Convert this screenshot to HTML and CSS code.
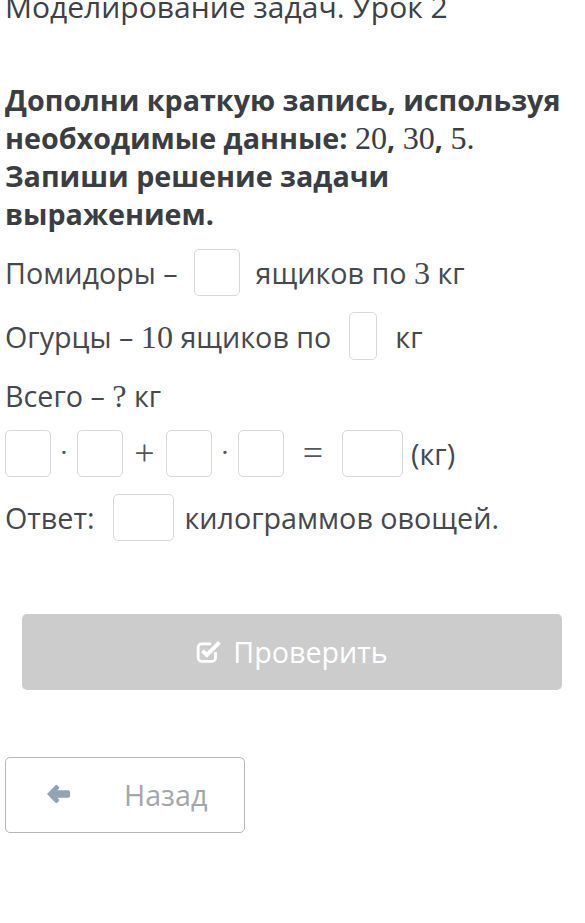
FILE: index.html
```html
<!DOCTYPE html>
<html lang="ru">
<head>
<meta charset="utf-8">
<link rel="stylesheet" href="styles.css">
</head>
<body>
<div class="page">
  <h1 class="title">Моделирование задач. Урок 2</h1>
  <p class="task">Дополни краткую запись, используя необходимые данные: <span class="num">20</span>, <span class="num">30</span>, <span class="num">5.</span> Запиши решение задачи выражением.</p>

  <div class="row r1">
    <span>Помидоры –</span>
    <span class="box"></span>
    <span>ящиков по <span class="num">3</span> кг</span>
  </div>
  <div class="row r2">
    <span>Огурцы – <span class="num">10</span> ящиков по</span>
    <span class="box narrow"></span>
    <span>кг</span>
  </div>
  <div class="row r3">
    <span>Всего – <span class="num">?</span> кг</span>
  </div>
  <div class="row r4">
    <span class="box"></span>
    <span class="op dot">·</span>
    <span class="box"></span>
    <span class="op plus">+</span>
    <span class="box"></span>
    <span class="op dot">·</span>
    <span class="box"></span>
    <span class="op eq">=</span>
    <span class="box wide"></span>
    <span class="unit">(кг)</span>
  </div>
  <div class="row r5">
    <span>Ответ:</span>
    <span class="box wide"></span>
    <span>килограммов овощей.</span>
  </div>

  <div class="check-wrap">
    <button class="check">
      <svg class="check-icon" viewBox="0 0 24 24" width="26" height="26">
        <path d="M18 13 V18.5 a3 3 0 0 1 -3 3 H5 a3 3 0 0 1 -3 -3 V8.5 a3 3 0 0 1 3 -3 H14" fill="none" stroke="#fff" stroke-width="2.6"/>
        <path d="M6 11.6 L10 15.6 L21.6 4" fill="none" stroke="#fff" stroke-width="3.6"/>
      </svg>
      <span>Проверить</span>
    </button>
  </div>

  <button class="back">
    <svg class="back-icon" viewBox="0 0 22 20" width="25" height="22">
      <path d="M0.6 10 L8 2.2 Q9 1.2 10 2.2 L11.2 3.4 Q12.2 4.4 11.2 5.4 L9.8 6.6 H20 Q21.5 6.6 21.5 8.1 V11.9 Q21.5 13.4 20 13.4 H9.8 L11.2 14.6 Q12.2 15.6 11.2 16.6 L10 17.8 Q9 18.8 8 17.8 Z" fill="#8fa4b5"/>
    </svg>
    <span class="back-text">Назад</span>
  </button>
</div>
</body>
</html>
```
FILE: styles.css
```css
html, body {
  margin: 0;
  padding: 0;
  background: #fff;
}
.page {
  padding: 0 0 0 5px;
  font-family: "Open Sans", "Noto Sans", sans-serif;
  color: #45484d;
}
.title {
  margin: -11px 0 0 0;
  font-size: 30px;
  line-height: 36px;
  font-weight: 400;
  color: #3d4045;
}
.task {
  margin: 56px 0 15px 0;
  font-size: 28.7px;
  line-height: 38px;
  font-weight: 700;
  color: #3a3d42;
}
.num {
  font-family: "Liberation Serif", "DejaVu Serif", serif;
  font-weight: 400;
  font-size: 1.12em;
  line-height: 1;
}
.row {
  display: flex;
  align-items: center;
  height: 48px;
  margin-bottom: 16px;
  font-size: 28.7px;
  white-space: nowrap;
}
.r1 .box { margin: 0 16px 0 16px; }
.r2 .box { margin: 0 18px 0 18px; }
.row.r3 { height: 38px; margin-bottom: 15px; }
.box {
  display: inline-block;
  box-sizing: border-box;
  width: 46px;
  height: 47px;
  border: 1.5px solid #d5d8dc;
  border-radius: 5px;
  background: #fff;
}
.box.narrow { width: 28px; height: 48px; }
.box.wide { width: 61px; }
.op {
  font-family: "Liberation Serif", "DejaVu Serif", serif;
  color: #555;
  text-align: center;
}
.dot { width: 26px; font-size: 28px; }
.plus { width: 43px; font-size: 36px; }
.eq { width: 58px; font-size: 36px; }
.unit { margin-left: 8px; }
.r5 .box { margin: 0 10px 0 19px; }

.check-wrap {
  padding: 57px 23px 0 17px;
}
.check {
  display: flex;
  align-items: center;
  justify-content: center;
  gap: 11px;
  width: 540px;
  height: 76px;
  border: none;
  border-radius: 5px;
  background: #cccccc;
  color: #fff;
  font-family: "Open Sans", "Noto Sans", sans-serif;
  font-size: 28.7px;
  padding: 0 0 2px 0;
}
.check-icon { flex: none; }
.back {
  display: flex;
  align-items: center;
  margin-top: 67px;
  width: 240px;
  height: 76px;
  box-sizing: border-box;
  background: #fff;
  border: 1.5px solid #b5b8bb;
  border-radius: 5px;
  padding: 0 0 2px 40px;
  font-family: "Open Sans", "Noto Sans", sans-serif;
  font-size: 28.7px;
  color: #a3a6a9;
}
.back-icon { flex: none; }
.back-text { margin-left: 53px; }
```
